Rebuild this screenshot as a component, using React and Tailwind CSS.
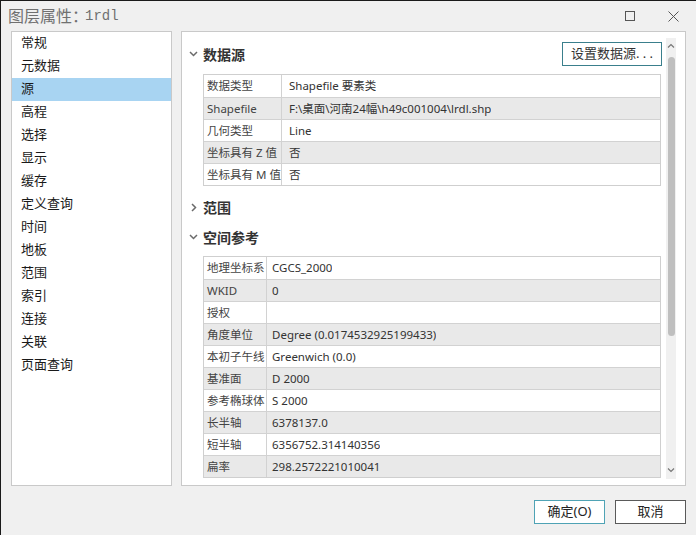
import React from "react";

const font = { fontFamily: '"Noto Sans", "Noto Sans CJK SC", sans-serif' };

const navItems = ["常规", "元数据", "源", "高程", "选择", "显示", "缓存", "定义查询", "时间", "地板", "范围", "索引", "连接", "关联", "页面查询"];

const sourceRows = [
  ["数据类型", "Shapefile 要素类"],
  ["Shapefile", "F:\\桌面\\河南24幅\\h49c001004\\lrdl.shp"],
  ["几何类型", "Line"],
  ["坐标具有 Z 值", "否"],
  ["坐标具有 M 值", "否"],
];

const srRows = [
  ["地理坐标系", "CGCS_2000"],
  ["WKID", "0"],
  ["授权", ""],
  ["角度单位", "Degree (0.0174532925199433)"],
  ["本初子午线", "Greenwich (0.0)"],
  ["基准面", "D 2000"],
  ["参考椭球体", "S 2000"],
  ["长半轴", "6378137.0"],
  ["短半轴", "6356752.314140356"],
  ["扁率", "298.2572221010041"],
];

const ChevronDown = () => (
  <svg width="9" height="6" viewBox="0 0 9 6" className="shrink-0">
    <polyline points="1,1 4.5,4.5 8,1" fill="none" stroke="#6b6b6b" strokeWidth="1.5" />
  </svg>
);

const ChevronRight = () => (
  <svg width="6" height="9" viewBox="0 0 6 9" className="shrink-0">
    <polyline points="1,1 4.5,4.5 1,8" fill="none" stroke="#6b6b6b" strokeWidth="1.5" />
  </svg>
);

const PropTable = ({ rows, labelW, valuePad }) => (
  <div className="ml-[21px] mr-[5px] border border-[#cfcfcf] shrink-0">
    {rows.map(([k, v], i) => (
      <div
        key={i}
        className={`flex h-[22px] text-[11.5px] leading-[21px] ${i > 0 ? "border-t border-[#d2d2d2]" : ""} ${i % 2 === 1 ? "bg-[#e9e9e9]" : "bg-white"}`}
      >
        <div className={`${labelW} shrink-0 pl-[3px] border-r border-[#d2d2d2] text-[#444] whitespace-nowrap overflow-hidden`}>{k}</div>
        <div className={`${valuePad} text-[#333] whitespace-nowrap overflow-hidden`}>{v}</div>
      </div>
    ))}
  </div>
);

const SectionHead = ({ open, title }) => (
  <div className="flex items-center h-[22px] pl-[7px] gap-[5px]">
    <div className="w-[9px] flex justify-center">{open ? <ChevronDown /> : <ChevronRight />}</div>
    <span className="text-[14px] font-bold text-[#333]">{title}</span>
  </div>
);

export default function App() {
  return (
    <div style={font} className="w-[696px] h-[535px] bg-[#f0f0f0] border-l border-t border-[#1a1a1a] flex flex-col overflow-hidden">
      {/* title bar */}
      <div className="h-[30px] flex items-center pl-[7px] pr-[17px] shrink-0">
        <span className="text-[16px] text-[#707070]">图层属性：</span>
        <span className="text-[14px] text-[#707070] -ml-[3px]" style={{ fontFamily: '"Liberation Mono", monospace' }}>1rdl</span>
        <div className="ml-auto flex items-center gap-[33px]">
          <div className="w-[10px] h-[10px] border border-[#555]" />
          <svg width="11" height="11" viewBox="0 0 11 11">
            <path d="M0.5 0.5 L10.5 10.5 M10.5 0.5 L0.5 10.5" stroke="#555" strokeWidth="1" />
          </svg>
        </div>
      </div>

      {/* body */}
      <div className="flex h-[455px] pl-[10px] gap-[9px] shrink-0">
        <div className="w-[161px] bg-white border border-[#c9c9c9] flex flex-col">
          {navItems.map((n) => (
            <div
              key={n}
              className={`h-[23px] leading-[21px] pl-[9px] text-[13px] text-[#1a1a1a] ${n === "源" ? "bg-[#a8d4f2]" : ""}`}
            >
              {n}
            </div>
          ))}
        </div>

        <div className="w-[505px] bg-white border border-[#c9c9c9] flex pt-[6px] pb-[6px] pr-[9px]">
          <div className="flex-1 flex flex-col overflow-hidden">
            <div className="flex items-center h-[24px] mt-[4px] pl-[7px] gap-[5px]">
              <div className="w-[9px] flex justify-center"><ChevronDown /></div>
              <span className="text-[14px] font-bold text-[#333]">数据源</span>
              <button className="ml-auto mr-[4px] w-[100px] h-[24px] border border-[#3a7f8c] text-[13px] text-[#333] bg-white">
                设置数据源. . .
              </button>
            </div>
            <div className="mt-[8px]">
              <PropTable rows={sourceRows} labelW="w-[78px]" valuePad="pl-[7px]" />
            </div>
            <div className="mt-[10px]">
              <SectionHead open={false} title="范围" />
            </div>
            <div className="mt-[8px]">
              <SectionHead open title="空间参考" />
            </div>
            <div className="mt-[8px]">
              <PropTable rows={srRows} labelW="w-[63px]" valuePad="pl-[5px]" />
            </div>
          </div>

          {/* scrollbar */}
          <div className="w-[10px] bg-[#f0f0f0] flex flex-col items-center shrink-0">
            <svg width="8" height="6" viewBox="0 0 8 6" className="mt-[5px]">
              <polyline points="1,4.5 4,1.5 7,4.5" fill="none" stroke="#777" strokeWidth="1.2" />
            </svg>
            <div className="w-[7px] h-[279px] mt-[8px] rounded-full bg-[#bfbfbf]" />
            <svg width="8" height="6" viewBox="0 0 8 6" className="mt-auto mb-[6px]">
              <polyline points="1,1.5 4,4.5 7,1.5" fill="none" stroke="#777" strokeWidth="1.2" />
            </svg>
          </div>
        </div>
      </div>

      {/* footer */}
      <div className="flex justify-end gap-[10px] pt-[14px] pr-[10px]">
        <button className="w-[71px] h-[24px] border border-[#4fa3b5] bg-white text-[13px] text-[#222]">确定(O)</button>
        <button className="w-[71px] h-[24px] border border-[#5a5a5a] bg-white text-[13px] text-[#222]">取消</button>
      </div>
    </div>
  );
}
